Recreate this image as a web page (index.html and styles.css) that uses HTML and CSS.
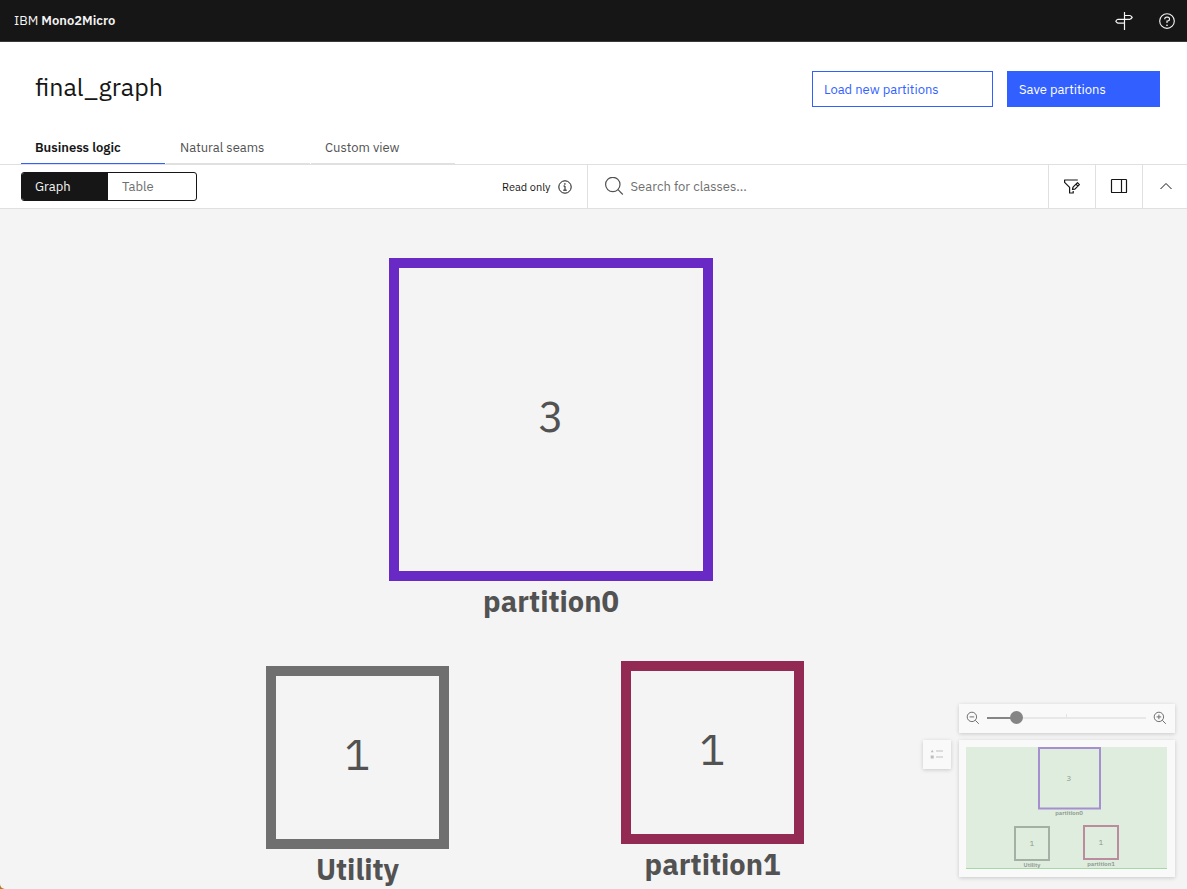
FILE: index.html
```html
<!DOCTYPE html>
<html lang="en">
<head>
<meta charset="utf-8">
<meta name="viewport" content="width=device-width, initial-scale=1">
<title>IBM Mono2Micro</title>
<link rel="stylesheet" href="styles.css">
</head>
<body>
<div class="app">
  <header class="topbar">
    <a class="brand" href="#">IBM <strong>Mono2Micro</strong></a>
    <div class="topbar-actions">
      <button class="icon-button" type="button" aria-label="Tour">
        <svg width="18" height="18" viewBox="0 0 18 18" fill="none" stroke="currentColor" stroke-width="1.2" stroke-linejoin="round"><path d="M9.500 0v18M9.500 3.500h5.400q1.300.4 2.300 1.900-1 1.500-2.300 1.900H3Q1.700 7.700.8 9.200q.9 1.500 2.200 1.900h6.500"/></svg>
      </button>
      <button class="icon-button" type="button" aria-label="Help">
        <svg width="18" height="18" viewBox="0 0 32 32" fill="currentColor"><path d="M16 2a14 14 0 1 0 14 14A14 14 0 0 0 16 2Zm0 26a12 12 0 1 1 12-12 12 12 0 0 1-12 12Z"/><circle cx="16" cy="23.5" r="1.5"/><path d="M17 8h-1.500A4.490 4.490 0 0 0 11 12.500V13h2v-.5a2.500 2.500 0 0 1 2.500-2.500H17a2.500 2.500 0 0 1 0 5h-2v4.500h2V17a4.500 4.500 0 0 0 0-9Z"/></svg>
      </button>
    </div>
  </header>

  <section class="page-head">
    <div class="title-row">
      <h1 class="title">final_graph</h1>
      <div class="title-actions">
        <button class="button button-outline" type="button">Load new partitions</button>
        <button class="button button-primary" type="button">Save partitions</button>
      </div>
    </div>
    <nav class="tabs">
      <a class="tab tab-active" href="#" aria-current="page">Business logic</a>
      <a class="tab" href="#">Natural seams</a>
      <a class="tab" href="#">Custom view</a>
    </nav>
  </section>

  <section class="toolbar">
    <div class="toolbar-left">
      <div class="switcher">
        <button class="switch switch-active" type="button">Graph</button>
        <button class="switch" type="button">Table</button>
      </div>
      <div class="read-only">
        <span>Read only</span>
        <svg width="14" height="14" viewBox="0 0 14 14" fill="none" stroke="currentColor"><circle cx="7" cy="7" r="6.200"/><path d="M5.500 6H7v4.200M5.200 10.200h3.600"/><circle cx="6.900" cy="3.900" r=".5" fill="currentColor" stroke-width=".5"/></svg>
      </div>
    </div>
    <label class="search">
      <svg width="20" height="20" viewBox="0 0 20 20" fill="none" stroke="currentColor" stroke-width="1.200"><circle cx="8.800" cy="7.500" r="7.200"/><path d="m14 12.700 4.800 4.800"/></svg>
      <input class="search-input" type="text" placeholder="Search for classes..." aria-label="Search for classes">
    </label>
    <button class="tool" type="button" aria-label="Edit filters">
      <svg width="18" height="18" viewBox="0 0 18 18" fill="none" stroke="currentColor" stroke-width="1.200" stroke-linejoin="round"><path d="M14.800 2H1.600v2.300l5 5V15h3.600v-2"/><path d="m9.500 11.500.5-2.300 4.500-4.500 1.900 1.900-4.500 4.500ZM13 6.200l1.900 1.900"/></svg>
    </button>
    <button class="tool" type="button" aria-label="Toggle side panel">
      <svg width="18" height="18" viewBox="0 0 18 18" fill="none" stroke="currentColor" stroke-width="1.200"><rect x="1.500" y="1.500" width="15" height="13" rx=".6"/><path d="M11.500 1.500v13"/></svg>
    </button>
    <button class="tool" type="button" aria-label="Collapse header">
      <svg width="18" height="18" viewBox="0 0 18 18" fill="none" stroke="currentColor"><path d="m3.500 11 5.500-5.500 5.500 5.500"/></svg>
    </button>
  </section>

  <main class="canvas">
    <figure class="node node-partition0">
      <div class="node-box">3</div>
      <figcaption class="node-label">partition0</figcaption>
    </figure>
    <figure class="node node-utility">
      <div class="node-box">1</div>
      <figcaption class="node-label">Utility</figcaption>
    </figure>
    <figure class="node node-partition1">
      <div class="node-box">1</div>
      <figcaption class="node-label">partition1</figcaption>
    </figure>

    <aside class="overlay">
      <button class="panel legend" type="button" aria-label="Legend">
        <svg width="14" height="12" viewBox="0 0 14 12"><path fill="#dcdcdc" d="M6 1h7v2H6zM6 7h7v2H6z"/><path fill="#bdbdbd" d="M2.200.8 3.700 3.200h-3zM.7 6.500h3v3h-3z"/></svg>
      </button>
      <div class="overlay-column">
        <div class="panel zoom">
          <button class="zoom-button" type="button" aria-label="Zoom out">
            <svg width="14" height="14" viewBox="0 0 14 14" fill="none" stroke="currentColor"><circle cx="5.900" cy="5.900" r="4.700"/><path d="m9.300 9.300 3.500 3.500M3.600 5.900h4.600"/></svg>
          </button>
          <input class="zoom-slider" type="range" min="0" max="100" value="16" aria-label="Zoom level">
          <button class="zoom-button" type="button" aria-label="Zoom in">
            <svg width="14" height="14" viewBox="0 0 14 14" fill="none" stroke="currentColor"><circle cx="5.900" cy="5.900" r="4.700"/><path d="m9.300 9.300 3.500 3.500M3.600 5.900h4.600M5.900 3.600v4.600"/></svg>
          </button>
        </div>
        <div class="panel minimap">
          <svg class="minimap-view" viewBox="0 0 201 122" role="img" aria-label="Graph overview">
            <rect width="201" height="122" fill="#dfeddf"/>
            <path d="M0 121.500h201" stroke="#a7d7a7"/>
            <g fill="none" stroke-width="2">
              <rect x="73" y="1" width="61" height="60.500" stroke="#a58fd0"/>
              <rect x="49" y="80" width="34" height="33" stroke="#a5b0a5"/>
              <rect x="118" y="79" width="34" height="33" stroke="#bb8c9d"/>
            </g>
            <g class="minimap-number"><text x="103" y="34">3</text><text x="66" y="99">1</text><text x="135" y="98">1</text></g>
            <g class="minimap-label"><text x="103" y="68">partition0</text><text x="66" y="120">Utility</text><text x="135" y="119">partition1</text></g>
          </svg>
        </div>
      </div>
    </aside>
  </main>
</div>
</body>
</html>
```
FILE: styles.css
```css
* {
  box-sizing: border-box;
}

html {
  background: #b5771f;
}

body {
  margin: 0;
  color: #161616;
  font-family: "IBM Plex Sans", "Noto Sans", "Open Sans", sans-serif;
  font-size: 13px;
}

button,
input {
  font: inherit;
  color: inherit;
  margin: 0;
}

button {
  border: 0;
  padding: 0;
  background: none;
  cursor: pointer;
}

a {
  color: inherit;
  text-decoration: none;
}

svg {
  display: block;
  flex: none;
}

.app {
  display: flex;
  flex-direction: column;
  min-height: 100vh;
  background: #f4f4f4;
  border-bottom-left-radius: 5px;
}

.topbar {
  display: flex;
  align-items: center;
  justify-content: space-between;
  height: 42px;
  padding: 0 11px 0 14px;
  background: #161616;
  border-bottom: 1px solid #393939;
  color: #f4f4f4;
}

.brand strong {
  font-weight: 600;
}

.topbar-actions {
  display: flex;
  gap: 25px;
}

.page-head {
  background: #fff;
  border-bottom: 1px solid #e0e0e0;
}

.title-row {
  display: flex;
  align-items: flex-start;
  justify-content: space-between;
  padding: 29px 27px 0 35px;
}

.title {
  margin: 0;
  font-size: 25px;
  font-weight: 400;
  line-height: 32px;
}

.title-actions {
  display: flex;
  gap: 14px;
}

.button {
  height: 36px;
  padding: 0 11px;
  border: 1px solid #325fff;
  text-align: left;
}

.button-outline {
  width: 181px;
  color: #325fff;
}

.button-primary {
  width: 153px;
  background: #325fff;
  color: #fff;
}

.tabs {
  display: flex;
  gap: 1px;
  padding: 24px 21px 0;
}

.tab {
  width: 144px;
  height: 33px;
  padding: 0 14px;
  border-bottom: 1px solid #e0e0e0;
  color: #525252;
  line-height: 34px;
}

.tab-active {
  border-bottom-color: #325fff;
  color: #161616;
  font-weight: 600;
}

.toolbar {
  display: flex;
  height: 44px;
  background: #fff;
  border-bottom: 1px solid #e0e0e0;
}

.toolbar-left {
  display: flex;
  flex: 0 0 49.5%;
  align-items: center;
  justify-content: space-between;
  padding: 0 15px 0 21px;
  border-right: 1px solid #e0e0e0;
}

.switcher {
  display: flex;
  width: 176px;
  height: 29px;
  border: 1px solid #161616;
  border-radius: 3px;
  overflow: hidden;
}

.switch {
  flex: 1;
  padding: 0 14px;
  color: #6f6f6f;
  text-align: left;
}

.switch-active {
  padding: 0 13px;
  background: #161616;
  color: #f4f4f4;
}

.read-only {
  display: flex;
  align-items: center;
  gap: 7px;
  font-size: 11px;
}

.search {
  display: flex;
  flex: 1;
  align-items: center;
  gap: 7px;
  padding-left: 16px;
  color: #525252;
}

.search-input {
  flex: 1;
  min-width: 0;
  padding: 0;
  border: 0;
  outline: 0;
  background: none;
}

.search-input::placeholder {
  color: #6f6f6f;
  opacity: 1;
}

.tool {
  display: flex;
  align-items: center;
  justify-content: center;
  width: 47px;
  border-left: 1px solid #e0e0e0;
}

.tool:last-child {
  width: 45px;
  padding-left: 2px;
}

.canvas {
  position: relative;
  flex: 1;
  min-height: 680px;
}

.node {
  position: absolute;
  margin: 0;
  color: #525252;
}

.node-box {
  display: flex;
  align-items: center;
  justify-content: center;
  height: 183px;
  padding-bottom: 8px;
  border: 10px solid #6f6f6f;
  font-size: 43px;
}

.node-label {
  font-size: 29px;
  font-weight: 700;
  line-height: 40px;
  text-align: center;
}

.node-partition0 {
  left: 389px;
  top: 49px;
  width: 324px;
}

.node-partition0 .node-box {
  height: 323px;
  border-color: #6929c4;
}

.node-utility {
  left: 266px;
  top: 457px;
  width: 183px;
}

.node-partition1 {
  left: 621px;
  top: 452px;
  width: 183px;
}

.node-partition1 .node-box {
  border-color: #932a53;
}

.overlay {
  position: absolute;
  right: 12px;
  bottom: 12px;
  display: flex;
  align-items: flex-start;
  gap: 8px;
}

.overlay-column {
  display: flex;
  flex-direction: column;
  gap: 7px;
  width: 216px;
}

.panel {
  background: #f9f9f9;
  box-shadow: 0 1px 4px rgba(0, 0, 0, 0.18);
}

.legend {
  display: flex;
  align-items: center;
  justify-content: center;
  width: 28px;
  height: 29px;
  margin-top: 36px;
}

.zoom {
  display: flex;
  align-items: center;
  height: 29px;
  padding: 0 8px 1px 7px;
  gap: 7px;
  color: #6f6f6f;
}

.zoom-slider {
  flex: 1;
  min-width: 0;
  height: 14px;
  background: linear-gradient(#e4e4e4, #e4e4e4) 50% 3px / 1px 3px no-repeat;
  appearance: none;
}

.zoom-slider::-webkit-slider-runnable-track {
  height: 2px;
  background: linear-gradient(to right, #858585 19%, #e8e8e8 19%);
}

.zoom-slider::-webkit-slider-thumb {
  width: 13px;
  height: 13px;
  margin-top: -6px;
  border-radius: 50%;
  background: #858585;
  appearance: none;
}

.minimap {
  padding: 7px 8px 8px 7px;
}

.minimap-view {
  width: 100%;
  height: auto;
}

.minimap-number,
.minimap-label {
  fill: #8d988d;
  text-anchor: middle;
}

.minimap-number {
  font-size: 8px;
}

.minimap-label {
  font-size: 6px;
  font-weight: 600;
}
```
